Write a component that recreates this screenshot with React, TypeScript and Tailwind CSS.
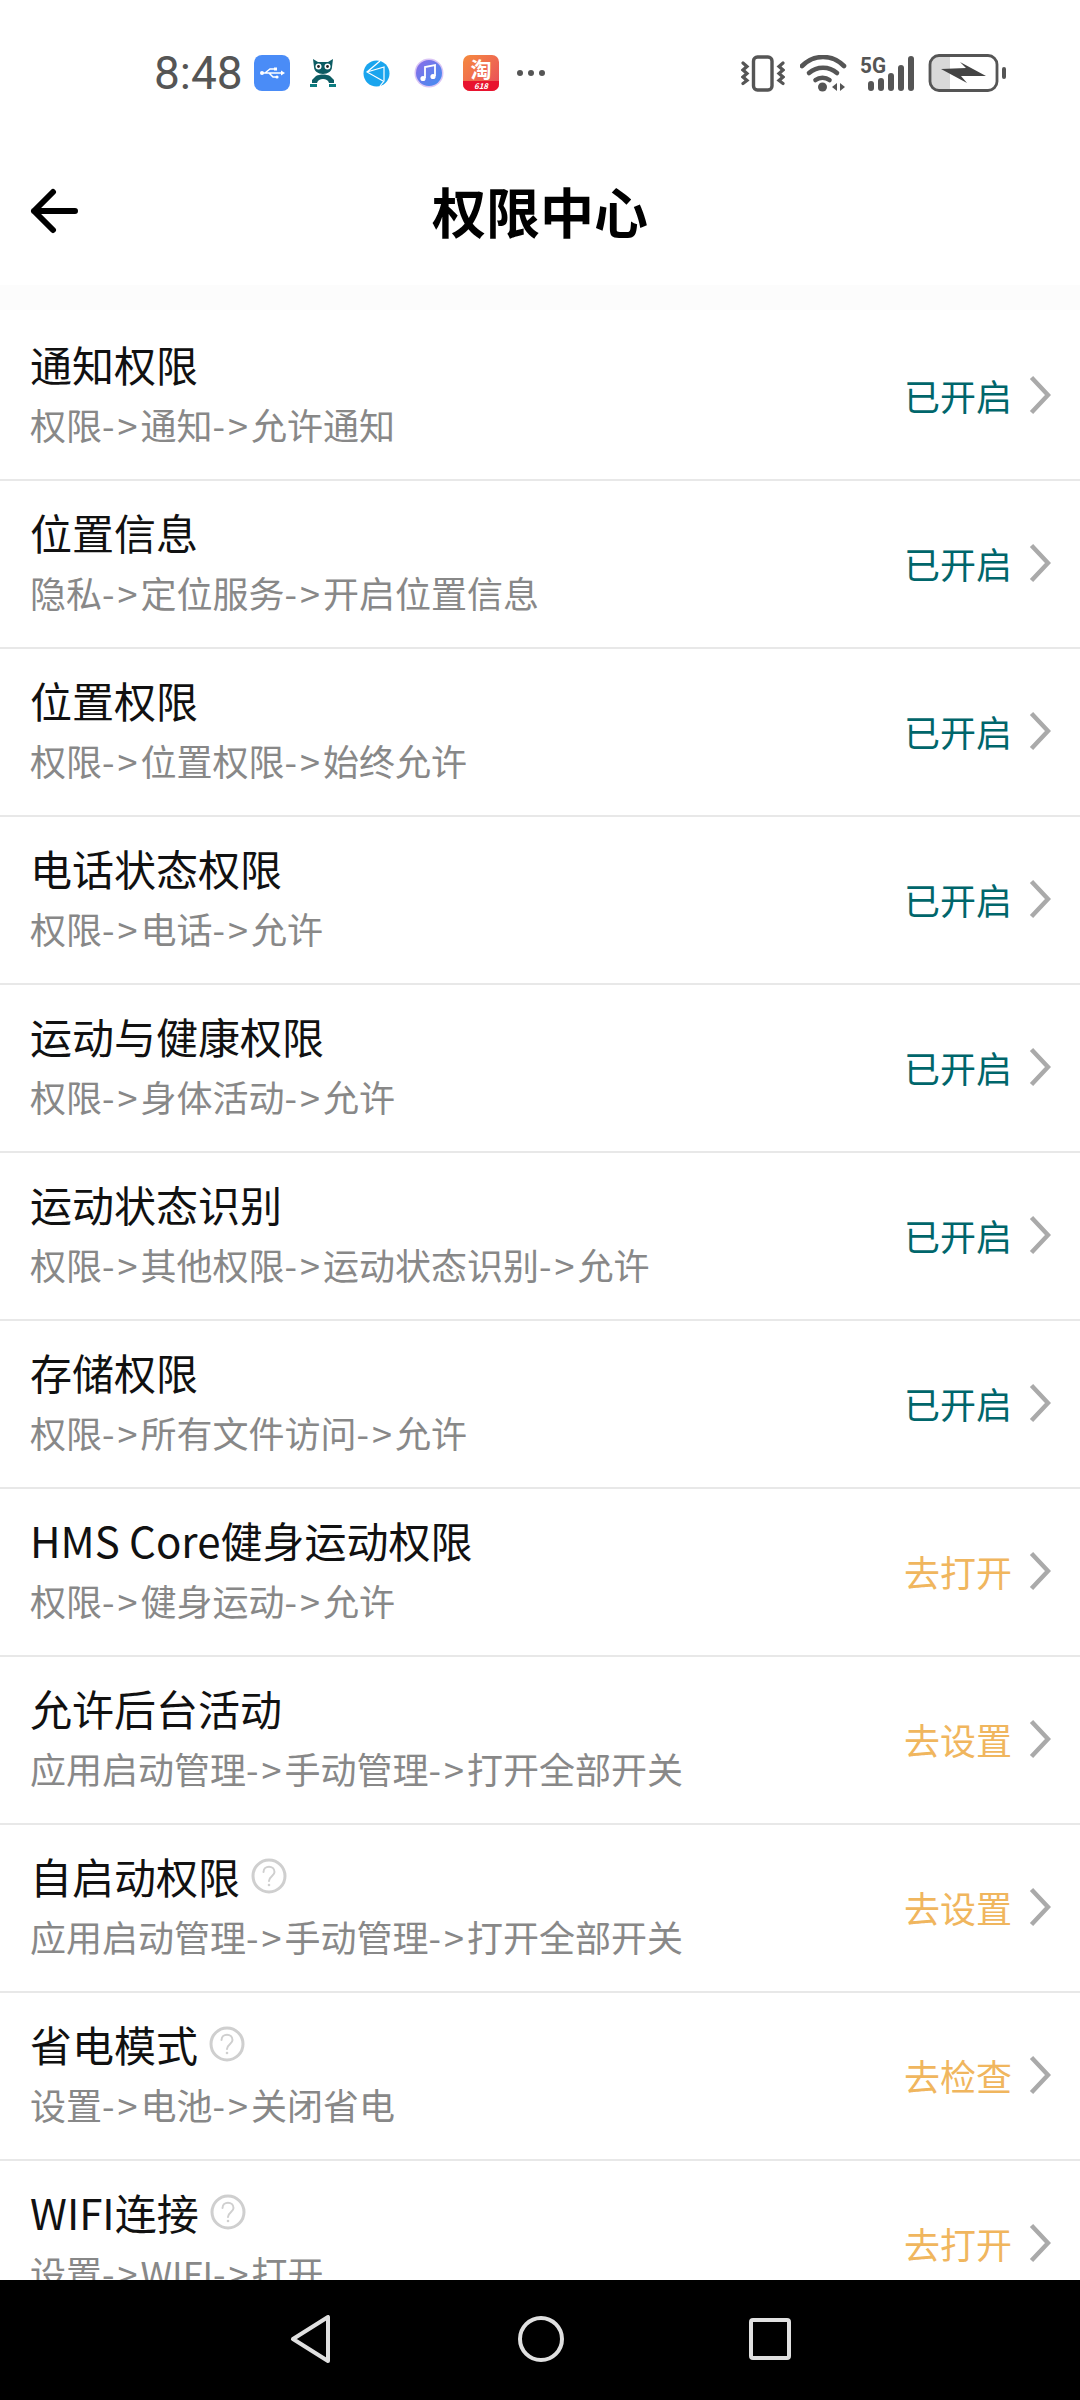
const OK = "text-[#00666b]";
const TODO = "text-[#f0b65e]";

const ROWS = [
  { title: "通知权限", desc: "权限->通知->允许通知", status: "已开启", color: OK },
  { title: "位置信息", desc: "隐私->定位服务->开启位置信息", status: "已开启", color: OK },
  { title: "位置权限", desc: "权限->位置权限->始终允许", status: "已开启", color: OK },
  { title: "电话状态权限", desc: "权限->电话->允许", status: "已开启", color: OK },
  { title: "运动与健康权限", desc: "权限->身体活动->允许", status: "已开启", color: OK },
  { title: "运动状态识别", desc: "权限->其他权限->运动状态识别->允许", status: "已开启", color: OK },
  { title: "存储权限", desc: "权限->所有文件访问->允许", status: "已开启", color: OK },
  { title: "HMS Core健身运动权限", desc: "权限->健身运动->允许", status: "去打开", color: TODO },
  { title: "允许后台活动", desc: "应用启动管理->手动管理->打开全部开关", status: "去设置", color: TODO },
  { title: "自启动权限", desc: "应用启动管理->手动管理->打开全部开关", status: "去设置", color: TODO, help: true },
  { title: "省电模式", desc: "设置->电池->关闭省电", status: "去检查", color: TODO, help: true },
  { title: "WIFI连接", desc: "设置->WIFI->打开", status: "去打开", color: TODO, help: true },
];

function UsbIcon() {
  return (
    <svg width="36" height="36" viewBox="0 0 36 36">
      <rect width="36" height="36" rx="8" fill="#4a8cf7" />
      <path d="M7 18h21M11 18l5-4h4M15 18l4 4h3" fill="none" stroke="#fff" strokeWidth="1.5" />
      <circle cx="8" cy="18" r="2" fill="#fff" />
      <path d="M27 15.5l4 2.5-4 2.5z" fill="#fff" />
      <rect x="20" y="12.5" width="3" height="3" fill="#fff" />
      <circle cx="23" cy="22" r="1.6" fill="#fff" />
    </svg>
  );
}

function OwlIcon() {
  return (
    <svg width="28" height="30" viewBox="0 0 28 30">
      <path d="M4 1l5 3h10l5-3-1 8c0 4-4 7-9 7s-9-3-9-7z" fill="#0c5c63" />
      <circle cx="9.5" cy="8.5" r="3" fill="#fff" />
      <circle cx="18.5" cy="8.5" r="3" fill="#fff" />
      <circle cx="9.5" cy="8.5" r="1.4" fill="#222" />
      <circle cx="18.5" cy="8.5" r="1.4" fill="#222" />
      <path d="M7 18c4-2 10-2 14 0l4 4v3h-5c-1-3-3-4-6-4s-5 1-6 4H3v-3z" fill="#0c5c63" />
      <path d="M1 26h7v3H1zM20 26h7v3h-7z" fill="#0c7c80" />
    </svg>
  );
}

function GlobeIcon() {
  return (
    <svg width="27" height="27" viewBox="0 0 27 27">
      <circle cx="13.5" cy="13.5" r="13" fill="#1aa5ee" />
      <path d="M17 1l-13 11 16 9M4 12l17-5v14l-4 5" fill="none" stroke="#fff" strokeWidth="1.2" />
    </svg>
  );
}

function MusicIcon() {
  return (
    <svg width="30" height="30" viewBox="0 0 30 30">
      <defs>
        <linearGradient id="music" x1="0" y1="0" x2="1" y2="1">
          <stop offset="0" stopColor="#8d6be8" />
          <stop offset="1" stopColor="#3f8ff0" />
        </linearGradient>
      </defs>
      <circle cx="15" cy="15" r="14.5" fill="#d9c4f5" />
      <circle cx="15" cy="15" r="13" fill="url(#music)" />
      <path d="M11 20V9l10-2v11" fill="none" stroke="#fff" strokeWidth="1.8" />
      <circle cx="9" cy="20.5" r="2.6" fill="#fff" />
      <circle cx="19" cy="18.5" r="2.6" fill="#fff" />
    </svg>
  );
}

function TaobaoIcon() {
  return (
    <div className="flex h-[36px] w-[36px] flex-col rounded-[7px] bg-gradient-to-br from-[#f58a3c] to-[#e8465a]">
      <div className="flex h-[26px] items-center justify-center text-[21px] font-bold leading-[26px] text-white">淘</div>
      <div className="flex h-[10px] items-center justify-center rounded-b-[7px] bg-[#e8132f] text-[8px] font-bold italic leading-[10px] text-white">618</div>
    </div>
  );
}

function VibrateIcon() {
  return (
    <svg width="44" height="37" viewBox="741 54 44 37" fill="none" stroke="#555" strokeLinecap="round">
      <rect x="753.5" y="56" width="18.5" height="33" rx="4" strokeWidth="3.4" />
      <path d="M743 62l4 3.5-4 3.5 4 3.5-4 3.5 4 3.5-4 3" strokeWidth="3.2" />
      <path d="M783 62l-4 3.5 4 3.5-4 3.5 4 3.5-4 3.5 4 3" strokeWidth="3.2" />
    </svg>
  );
}

function WifiIcon() {
  return (
    <svg width="47" height="37" viewBox="800 54 47 37" fill="none" stroke="#555" strokeLinecap="round">
      <path d="M802 65c12-12 30-12 42 0" strokeWidth="4.6" />
      <path d="M809 72c8-7 20-7 28 0" strokeWidth="4.6" />
      <path d="M815.5 79c4-3 10-3 14 0" strokeWidth="4.6" />
      <circle cx="822.5" cy="86" r="4.5" fill="#555" stroke="none" />
      <path d="M837 82v8l-5-4zM840 82v8l5-4z" fill="#555" stroke="none" />
    </svg>
  );
}

function SignalIcon() {
  return (
    <svg width="56" height="37" viewBox="860 54 56 37">
      <text x="860" y="72" fontFamily="Roboto, sans-serif" fontWeight="700" fontSize="22" textLength="26" lengthAdjust="spacingAndGlyphs" fill="#555">
        5G
      </text>
      <g fill="#555">
        <rect x="868" y="80" width="6" height="10" rx="3" />
        <rect x="878" y="77" width="6" height="13" rx="3" />
        <rect x="888" y="72" width="6" height="18" rx="3" />
        <rect x="898" y="64" width="6" height="26" rx="3" />
        <rect x="908" y="55" width="6" height="35" rx="3" />
      </g>
    </svg>
  );
}

function BatteryIcon() {
  return (
    <svg width="78" height="39" viewBox="928 54 78 39">
      <path d="M938 56h12v34h-12a8 8 0 0 1-8-8V64a8 8 0 0 1 8-8z" fill="#d9d9d9" />
      <rect x="930" y="55.5" width="67" height="35" rx="9" fill="none" stroke="#555" strokeWidth="2.8" />
      <path d="M941 69l25-1-6-6 26 14-25 0 6 7z" fill="#444" />
      <rect x="1002" y="67" width="4" height="12" rx="2" fill="#555" />
    </svg>
  );
}

function HelpIcon() {
  return (
    <svg width="36" height="36" viewBox="0 0 36 36" fill="none" stroke="#cfcfcf" strokeLinecap="round" className="ml-[11px] shrink-0">
      <circle cx="18" cy="18" r="16" strokeWidth="3" />
      <path d="M12.5 14c0-7 11-7 11 0 0 4-5 4-5.5 9" strokeWidth="2" />
      <circle cx="18" cy="27" r="1.3" fill="#cfcfcf" stroke="none" />
    </svg>
  );
}

function Chevron() {
  return (
    <svg width="22" height="40" viewBox="0 0 22 40" fill="none" stroke="#aaaaaa" strokeWidth="4.5" className="ml-[17px] shrink-0">
      <path d="M2.5 2.5L19 20 2.5 37.5" />
    </svg>
  );
}

// the arrow between steps sits wider than the font's own spacing
function Desc({ text }: { text: string }) {
  const parts = text.split("->");
  return (
    <span className="text-[36px] leading-[60px] text-[#888]">
      {parts.map((part, i) => (
        <span key={i}>
          {i > 0 && <span className="tracking-[3px]">{"->"}</span>}
          {part}
        </span>
      ))}
    </span>
  );
}

function StatusBar() {
  return (
    <div className="flex h-[146px] items-center justify-between pl-[154px] pr-[74px] text-[#555]">
      <div className="flex items-center">
        <span className="w-[100px] font-['Roboto'] text-[46px] font-normal leading-none">8:48</span>
        <UsbIcon />
        <div className="ml-[19px] w-[28px]"><OwlIcon /></div>
        <div className="ml-[26px] w-[27px]"><GlobeIcon /></div>
        <div className="ml-[24px] w-[30px]"><MusicIcon /></div>
        <div className="ml-[19px]"><TaobaoIcon /></div>
        <div className="ml-[18px] flex gap-[5px]">
          <span className="h-[6px] w-[6px] rounded-full bg-[#555]" />
          <span className="h-[6px] w-[6px] rounded-full bg-[#555]" />
          <span className="h-[6px] w-[6px] rounded-full bg-[#555]" />
        </div>
      </div>
      <div className="flex items-center">
        <VibrateIcon />
        <div className="ml-[15px]"><WifiIcon /></div>
        <div className="ml-[13px]"><SignalIcon /></div>
        <div className="ml-[12px]"><BatteryIcon /></div>
      </div>
    </div>
  );
}

function Row({ title, desc, status, color, help }: (typeof ROWS)[number]) {
  return (
    <div className="flex h-[168px] shrink-0 items-center justify-between border-b-2 border-[#e8e8e8] pl-[30px] pr-[29px]">
      <div className="flex flex-col pb-[5px]">
        <div className="flex h-[60px] items-center">
          <span className="text-[42px] leading-none text-[#111]">{title}</span>
          {help && <HelpIcon />}
        </div>
        <Desc text={desc} />
      </div>
      <div className="flex items-center pb-[2px]">
        <span className={`text-[36px] leading-none ${color}`}>{status}</span>
        <Chevron />
      </div>
    </div>
  );
}

export default function App() {
  return (
    <div className="flex h-[2400px] w-[1080px] flex-col overflow-hidden bg-white font-['Noto_Sans_CJK_SC',sans-serif]">
      <StatusBar />
      <div className="relative flex h-[139px] shrink-0 items-center justify-center pb-[9px]">
        <svg width="50" height="46" viewBox="0 0 50 46" fill="none" stroke="#000" strokeWidth="6" strokeLinecap="round" strokeLinejoin="round" className="absolute left-[29px] top-[42px]">
          <path d="M46 23H5M24 4L5 23l19 19" />
        </svg>
        <span className="text-[54px] font-bold leading-none text-black">权限中心</span>
      </div>
      <div className="h-[25px] shrink-0 bg-[#fcfcfc]" />
      <div className="flex flex-1 flex-col overflow-hidden pt-[3px]">
        {ROWS.map((row) => (
          <Row key={row.title} {...row} />
        ))}
      </div>
      <div className="flex h-[120px] shrink-0 items-center justify-center bg-black pb-[2px]">
        <svg width="40" height="48" viewBox="0 0 40 48" fill="none" stroke="#e0e0e0" strokeWidth="4" strokeLinejoin="round">
          <path d="M38 2v44L3 24z" />
        </svg>
        <svg width="46" height="46" viewBox="0 0 46 46" fill="none" stroke="#e0e0e0" strokeWidth="4" className="ml-[188px]">
          <circle cx="23" cy="23" r="21" />
        </svg>
        <svg width="42" height="42" viewBox="0 0 42 42" fill="none" stroke="#e0e0e0" strokeWidth="4" className="ml-[185px]">
          <rect x="2" y="2" width="38" height="38" rx="2" />
        </svg>
      </div>
    </div>
  );
}
